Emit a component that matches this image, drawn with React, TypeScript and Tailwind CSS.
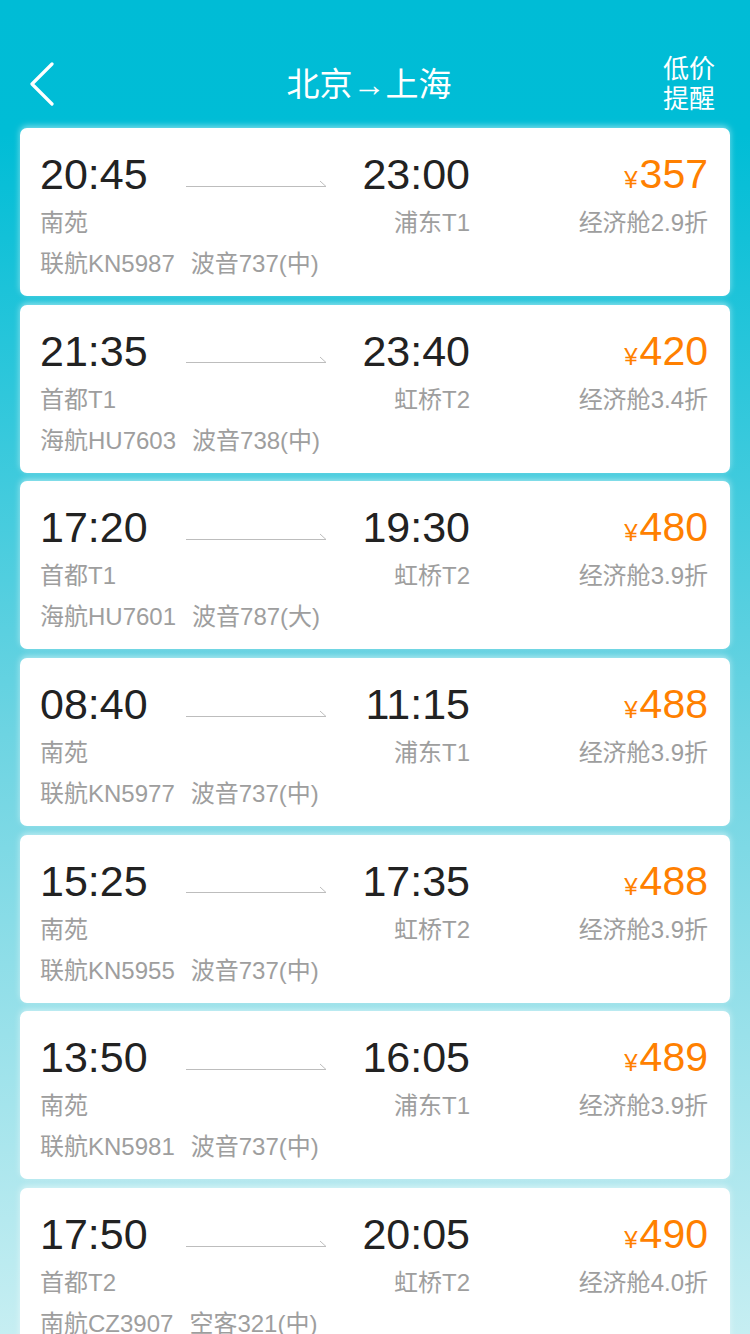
import type { ReactElement } from 'react';

type Flight = {
  depTime: string;
  arrTime: string;
  depAirport: string;
  arrAirport: string;
  price: number;
  discount: string;
  flightNo: string;
  plane: string;
};

const flights: Flight[] = [
  { depTime: '20:45', arrTime: '23:00', depAirport: '南苑', arrAirport: '浦东T1', price: 357, discount: '2.9', flightNo: '联航KN5987', plane: '波音737(中)' },
  { depTime: '21:35', arrTime: '23:40', depAirport: '首都T1', arrAirport: '虹桥T2', price: 420, discount: '3.4', flightNo: '海航HU7603', plane: '波音738(中)' },
  { depTime: '17:20', arrTime: '19:30', depAirport: '首都T1', arrAirport: '虹桥T2', price: 480, discount: '3.9', flightNo: '海航HU7601', plane: '波音787(大)' },
  { depTime: '08:40', arrTime: '11:15', depAirport: '南苑', arrAirport: '浦东T1', price: 488, discount: '3.9', flightNo: '联航KN5977', plane: '波音737(中)' },
  { depTime: '15:25', arrTime: '17:35', depAirport: '南苑', arrAirport: '虹桥T2', price: 488, discount: '3.9', flightNo: '联航KN5955', plane: '波音737(中)' },
  { depTime: '13:50', arrTime: '16:05', depAirport: '南苑', arrAirport: '浦东T1', price: 489, discount: '3.9', flightNo: '联航KN5981', plane: '波音737(中)' },
  { depTime: '17:50', arrTime: '20:05', depAirport: '首都T2', arrAirport: '虹桥T2', price: 490, discount: '4.0', flightNo: '南航CZ3907', plane: '空客321(中)' },
];

function FlightCard({ flight }: { flight: Flight }): ReactElement {
  return (
    <div className="h-[168px] shrink-0 rounded-[7px] bg-white pl-[20px] pr-[22px] pt-[22px] shadow-[0_-2px_6px_rgba(255,255,255,0.5)]">
      <div className="flex items-center">
        <div className="w-[146px] text-[43px] leading-[48px] text-[#222]">{flight.depTime}</div>
        <svg width="140" height="14" viewBox="0 0 140 14" className="mt-[17px]">
          <line x1="0" y1="10.5" x2="140" y2="10.5" stroke="#bdbdbd" strokeWidth="1" />
          <line x1="134" y1="5" x2="140" y2="10.5" stroke="#bdbdbd" strokeWidth="1" />
        </svg>
        <div className="w-[144px] text-right text-[43px] leading-[48px] text-[#222]">{flight.arrTime}</div>
        <div className="flex flex-1 items-baseline justify-end text-[#ff8000]">
          <span className="mr-[2px] text-[24px]">¥</span>
          <span className="text-[41px] leading-[48px]">{flight.price}</span>
        </div>
      </div>
      <div className="mt-[10px] flex items-center text-[24px] leading-[30px] text-[#9e9e9e]">
        <div className="w-[146px]">{flight.depAirport}</div>
        <div className="w-[140px]" />
        <div className="w-[144px] text-right">{flight.arrAirport}</div>
        <div className="flex-1 text-right">经济舱{flight.discount}折</div>
      </div>
      <div className="mt-[11px] flex text-[24px] leading-[30px] text-[#9e9e9e]">
        <span>{flight.flightNo}</span>
        <span className="ml-[16px]">{flight.plane}</span>
      </div>
    </div>
  );
}

export default function App(): ReactElement {
  return (
    <div
      className="flex h-[1334px] w-[750px] flex-col overflow-hidden bg-[linear-gradient(180deg,#00bcd6_0%,#00bdd6_10%,#6dd4e2_55%,#c6eef2_100%)]"
      style={{ fontFamily: '"Helvetica Neue", "Liberation Sans", "Noto Sans CJK SC", sans-serif' }}
    >
      <header className="relative mt-[40px] flex h-[88px] shrink-0 items-center justify-center pr-[12px]">
        <button type="button" className="absolute left-[28px] top-[22px]" aria-label="返回">
          <svg width="28" height="44" viewBox="0 0 28 44" fill="none">
            <polyline points="24,2 4,22 24,42" stroke="#fff" strokeWidth="3.2" strokeLinecap="round" strokeLinejoin="round" />
          </svg>
        </button>
        <h1 className="text-[33px] leading-none text-white">北京→上海</h1>
        <div className="absolute right-[35px] top-[14px] text-[26px] leading-[30px] text-white">
          <div>低价</div>
          <div>提醒</div>
        </div>
      </header>

      <main className="flex flex-col gap-[8.7px] px-[20px]">
        {flights.map((flight) => (
          <FlightCard key={flight.flightNo} flight={flight} />
        ))}
      </main>
    </div>
  );
}
